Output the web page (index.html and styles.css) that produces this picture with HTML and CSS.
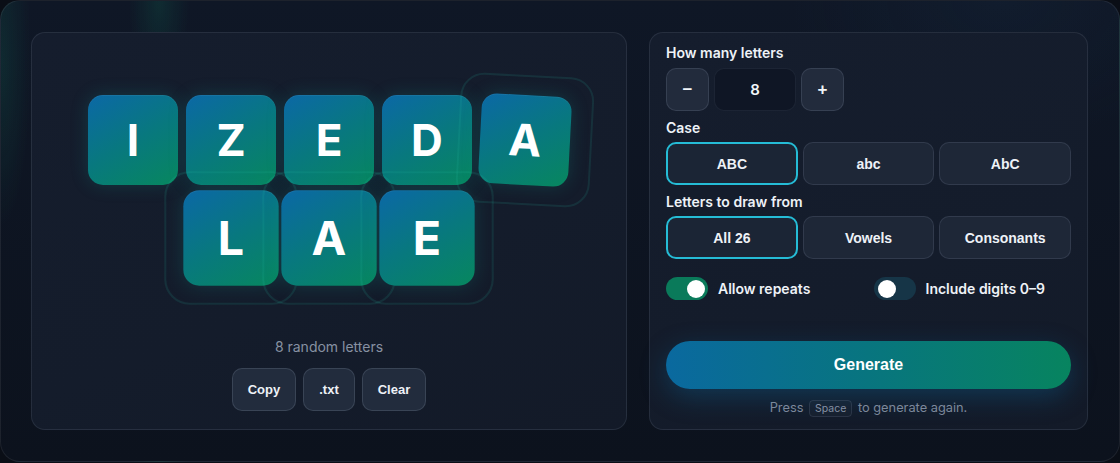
FILE: index.html
```html
<!DOCTYPE html>
<html lang="en">
<head>
<meta charset="utf-8">
<title>Random Letters</title>
<link rel="stylesheet" href="styles.css">
</head>
<body>
<div class="app">
  <section class="panel stage">
    <div class="tiles">
      <div class="tile">I</div>
      <div class="tile">Z</div>
      <div class="tile">E</div>
      <div class="tile">D</div>
      <div class="tile tile-tilt"><span class="ring ring-wide"></span>A</div>
      <div class="tile tile-pop"><span class="ring"></span>L</div>
      <div class="tile tile-pop"><span class="ring"></span>A</div>
      <div class="tile tile-pop"><span class="ring"></span>E</div>
    </div>
    <p class="count">8 random letters</p>
    <div class="actions">
      <button class="btn">Copy</button>
      <button class="btn">.txt</button>
      <button class="btn">Clear</button>
    </div>
  </section>

  <section class="panel controls">
    <div class="label">How many letters</div>
    <div class="stepper">
      <button class="step">&minus;</button>
      <div class="num">8</div>
      <button class="step">+</button>
    </div>

    <div class="label gap">Case</div>
    <div class="seg">
      <button class="opt active">ABC</button>
      <button class="opt">abc</button>
      <button class="opt">AbC</button>
    </div>

    <div class="label gap">Letters to draw from</div>
    <div class="seg">
      <button class="opt active">All 26</button>
      <button class="opt">Vowels</button>
      <button class="opt">Consonants</button>
    </div>

    <div class="toggles">
      <label class="tg"><span class="switch on"><span class="knob"></span></span>Allow repeats</label>
      <label class="tg"><span class="switch"><span class="knob"></span></span>Include digits 0–9</label>
    </div>

    <button class="generate">Generate</button>
    <p class="hint">Press <kbd>Space</kbd> to generate again.</p>
  </section>
</div>
</body>
</html>
```

FILE: styles.css
```css
* { box-sizing: border-box; }

html, body {
  margin: 0;
  background: #0a0e16;
}

body {
  font-family: Inter, "Noto Sans", sans-serif;
  color: #e6ebf2;
}

.app {
  height: 462px;
  border: 1px solid rgba(255, 255, 255, 0.07);
  border-radius: 20px;
  padding: 31px 30px 30px 30px;
  display: grid;
  grid-template-columns: 596px 439px;
  column-gap: 22px;
  background:
    radial-gradient(ellipse 40px 120px at 158px 0px, rgba(16, 150, 110, 0.16), transparent 75%),
    radial-gradient(ellipse 40px 220px at 0px 60px, rgba(16, 130, 100, 0.18), transparent 75%),
    radial-gradient(ellipse 300px 200px at 1000px 0px, rgba(30, 60, 90, 0.14), transparent 70%),
    linear-gradient(180deg, #0f1726 0%, #0c121d 100%);
}

.panel {
  height: 398px;
  border: 1px solid rgba(148, 163, 184, 0.14);
  border-radius: 14px;
  background: linear-gradient(160deg, #151d2d 0%, #141c2b 60%, #131a28 100%);
}

/* ---------- stage ---------- */
.stage {
  display: flex;
  flex-direction: column;
  align-items: center;
  padding: 62px 0 18px;
}

.tiles {
  width: 500px;
  display: flex;
  flex-wrap: wrap;
  justify-content: center;
  gap: 8px;
}

.tile {
  position: relative;
  width: 90px;
  height: 90px;
  border-radius: 15px;
  display: flex;
  align-items: center;
  justify-content: center;
  font-size: 44px;
  font-weight: 700;
  color: #ffffff;
  background: linear-gradient(150deg, #0b68a6 0%, #08787f 50%, #07875e 100%);
  box-shadow: 0 0 18px rgba(20, 160, 150, 0.22), inset 0 1px 0 rgba(255, 255, 255, 0.06);
}

.tile-pop { transform: scale(1.06); }
.tile-tilt { transform: rotate(3deg); }

.ring {
  position: absolute;
  inset: -21px;
  border: 2px solid rgba(45, 200, 170, 0.12);
  border-radius: 24px;
  pointer-events: none;
}

.tile-pop .ring { inset: -18px; }
.ring-wide { inset: -20px -22px; }

.count {
  margin: 54px 0 0;
  height: 20px;
  line-height: 20px;
  font-size: 14px;
  color: #8791a2;
}

.actions {
  margin-top: 11px;
  display: flex;
  gap: 7px;
}

.btn {
  height: 43px;
  padding: 0 15px;
  border-radius: 10px;
  border: 1px solid rgba(148, 163, 184, 0.2);
  background: #222c3d;
  color: #eef2f7;
  font-family: "Liberation Sans", Arial, sans-serif;
  font-weight: 700;
  font-size: 13px;
}

/* ---------- controls ---------- */
.controls {
  padding: 10px 16px 11px;
  display: flex;
  flex-direction: column;
}

.label {
  height: 20px;
  line-height: 20px;
  font-size: 14px;
  font-weight: 600;
  color: #eef2f7;
  margin-bottom: 5px;
}

.label.gap {
  margin-top: 7px;
  margin-bottom: 4px;
}

.stepper {
  display: flex;
  gap: 5px;
}

.step {
  width: 43px;
  height: 43px;
  border-radius: 10px;
  border: 1px solid rgba(148, 163, 184, 0.18);
  background: #222b3c;
  color: #f1f5f9;
  font-family: "Liberation Sans", Arial, sans-serif;
  font-weight: 700;
  font-size: 17px;
}

.num {
  width: 82px;
  height: 43px;
  border-radius: 10px;
  border: 1px solid rgba(148, 163, 184, 0.1);
  background: #0f1625;
  display: flex;
  align-items: center;
  justify-content: center;
  font-size: 15px;
  font-weight: 600;
  color: #f1f5f9;
}

.seg {
  display: grid;
  grid-template-columns: repeat(3, 1fr);
  gap: 5px;
}

.opt {
  height: 43px;
  border-radius: 10px;
  border: 1px solid rgba(148, 163, 184, 0.16);
  background: #1e2737;
  color: #eef2f7;
  font-family: "Liberation Sans", Arial, sans-serif;
  font-weight: 700;
  font-size: 14px;
}

.opt.active {
  border: 2px solid #25bcd6;
  background: #1b2535;
}

.toggles {
  margin-top: 18px;
  display: grid;
  grid-template-columns: 1fr 1fr;
  column-gap: 10px;
}

.tg {
  display: flex;
  align-items: center;
  gap: 10px;
  height: 23px;
  font-size: 14px;
  font-weight: 600;
  color: #eef2f7;
}

.switch {
  position: relative;
  width: 42px;
  height: 23px;
  border-radius: 12px;
  background: #163547;
  flex: none;
}

.switch.on { background: #0a7a5a; }

.knob {
  position: absolute;
  top: 2.5px;
  left: 4px;
  width: 18px;
  height: 18px;
  border-radius: 50%;
  background: #ffffff;
}

.switch.on .knob { left: 21px; }

.generate {
  margin-top: 41px;
  height: 48px;
  border: none;
  border-radius: 24px;
  background: linear-gradient(90deg, #0a699f 0%, #08757f 50%, #07845f 100%);
  color: #ffffff;
  font-family: "Liberation Sans", Arial, sans-serif;
  font-weight: 700;
  font-size: 16px;
  box-shadow: 0 8px 26px rgba(14, 100, 150, 0.38);
}

.hint {
  margin: 9px 0 0;
  height: 20px;
  line-height: 20px;
  text-align: center;
  font-size: 12.8px;
  color: #7c889b;
}

kbd {
  font-family: Inter, "Noto Sans", sans-serif;
  font-size: 10.5px;
  color: #8591a4;
  padding: 1px 5px;
  margin: 0 2px;
  border: 1px solid rgba(148, 163, 184, 0.16);
  border-radius: 4px;
  background: rgba(255, 255, 255, 0.02);
}
```
